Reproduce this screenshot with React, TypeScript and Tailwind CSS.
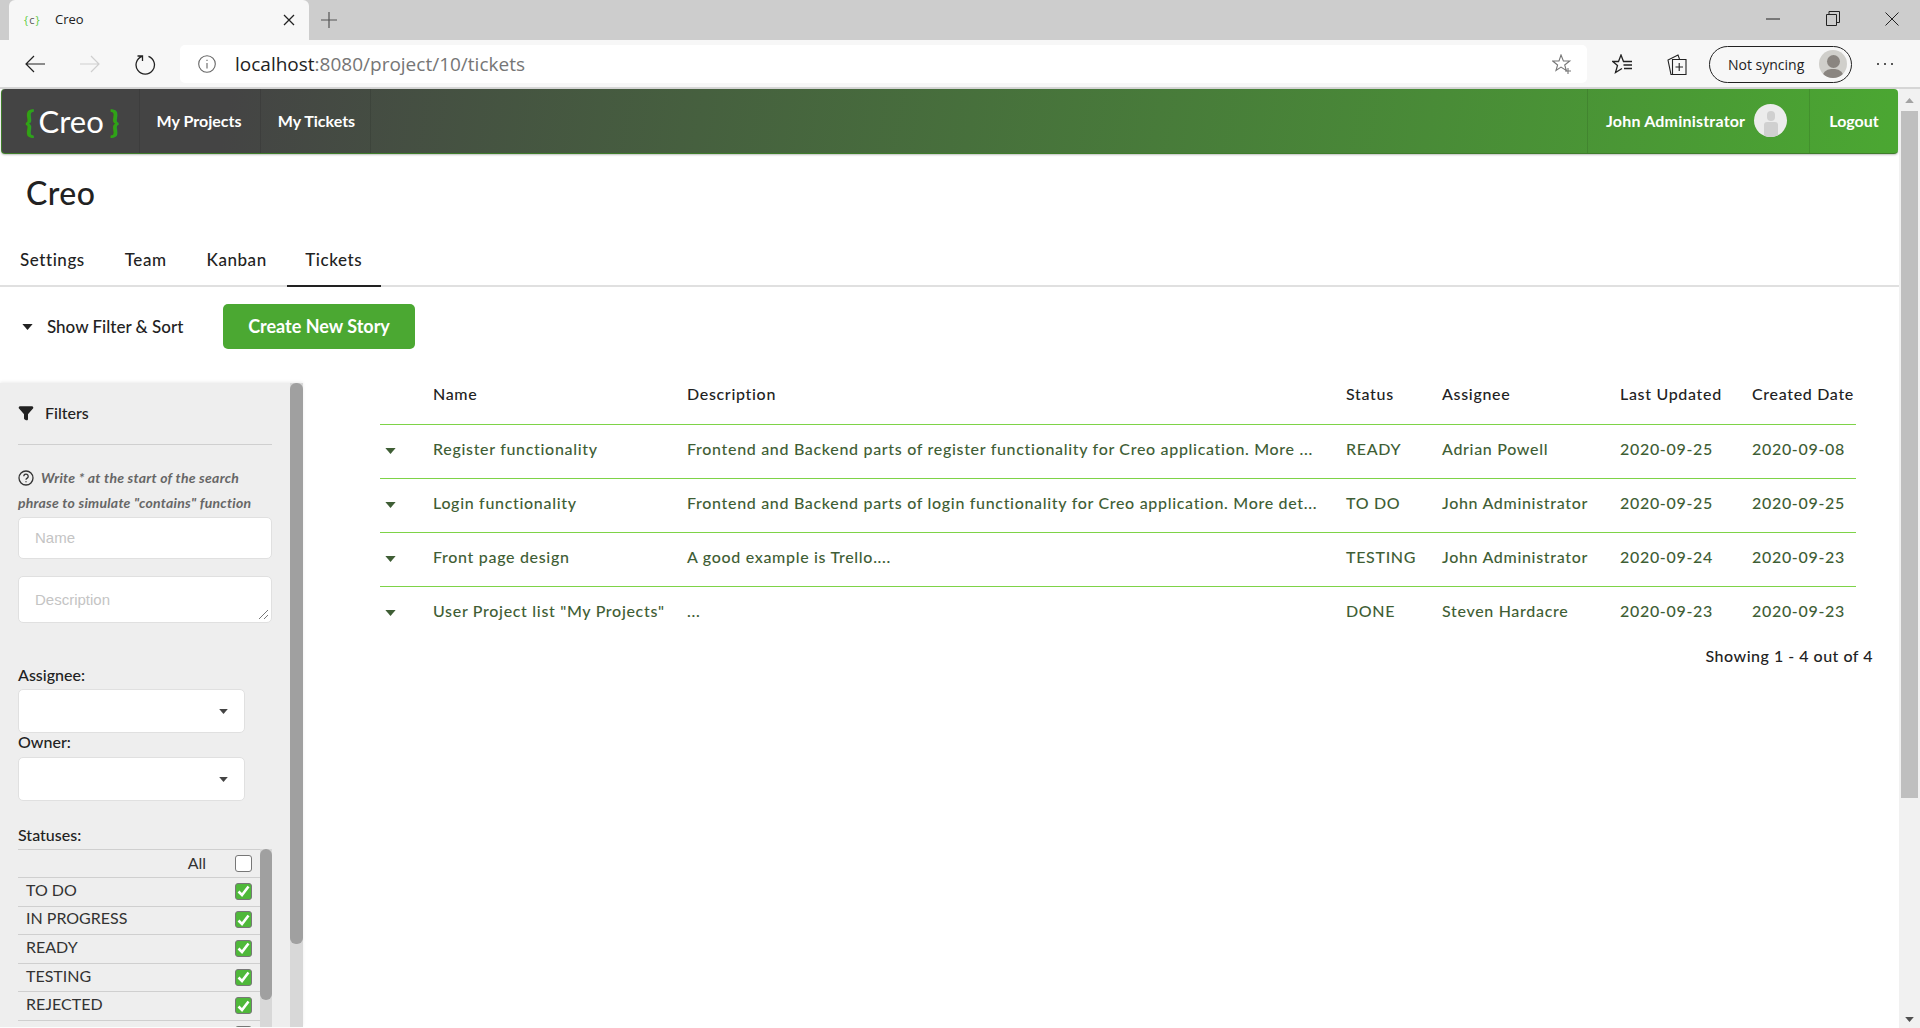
import React from "react";
import { Filter } from "lucide-react";

const rows = [
  ["Register functionality", "Frontend and Backend parts of register functionality for Creo application. More ...", "READY", "Adrian Powell", "2020-09-25", "2020-09-08"],
  ["Login functionality", "Frontend and Backend parts of login functionality for Creo application. More det...", "TO DO", "John Administrator", "2020-09-25", "2020-09-25"],
  ["Front page design", "A good example is Trello....", "TESTING", "John Administrator", "2020-09-24", "2020-09-23"],
  ['User Project list "My Projects"', "...", "DONE", "Steven Hardacre", "2020-09-23", "2020-09-23"],
];

const statuses = ["TO DO", "IN PROGRESS", "READY", "TESTING", "REJECTED", "DONE"];
const headers = ["", "Name", "Description", "Status", "Assignee", "Last Updated", "Created Date"];

function Caret({ className }: { className: string }) {
  return (
    <svg width="12" height="7" viewBox="0 0 12 7" className={className}>
      <path d="M0 0h12L6 7z" fill="currentColor" />
    </svg>
  );
}

function BrowserChrome() {
  return (
    <header className="shrink-0 font-['Open_Sans',sans-serif]">
      {/* Tab strip */}
      <div className="flex h-10 items-end bg-[#cdcdcd] pl-[9px]">
        <div className="flex h-10 w-[300px] items-center rounded-t-md bg-[#f7f7f7] pl-[15px] pr-[14px]">
          <span className="w-[31px] text-[11px] tracking-[1px] text-[#555]">
            <span className="text-[#5ecb3c]">{"{"}</span>c<span className="text-[#5ecb3c]">{"}"}</span>
          </span>
          <span className="flex-1 text-[13px] text-[#222]">Creo</span>
          <svg width="12" height="12" viewBox="0 0 12 12" stroke="#222" strokeWidth="1.3">
            <path d="M1 1l10 10M11 1L1 11" />
          </svg>
        </div>
        <svg width="18" height="18" viewBox="0 0 18 18" stroke="#555" strokeWidth="1.2" className="mb-[11px] ml-[11px]">
          <path d="M9 1v16M1 9h16" />
        </svg>
        <div className="mb-[14px] ml-auto flex items-center">
          <svg width="14" height="2" viewBox="0 0 14 2" className="mr-[46px]">
            <path d="M0 1h14" stroke="#222" />
          </svg>
          <svg width="14" height="15" viewBox="0 0 14 15" fill="none" stroke="#222" className="mr-[45px]">
            <path d="M.5 3.5h10v11H.5zM3 3.5V.5h10.5v11h-3" />
          </svg>
          <svg width="14" height="14" viewBox="0 0 14 14" stroke="#222" className="mr-[21px]">
            <path d="M.5.5l13 13M13.5.5l-13 13" />
          </svg>
        </div>
      </div>
      {/* Toolbar */}
      <div className="flex h-[49px] items-start border-b-2 border-[#d6d6d6] bg-[#f7f7f7] pt-[5px]">
        <div className="flex h-[38px] w-[180px] items-center pl-[25px]">
          <svg width="20" height="18" viewBox="0 0 20 18" fill="none" stroke="#222" strokeWidth="1.2">
            <path d="M20 9H1M9 1L1 9l8 8" />
          </svg>
          <svg width="20" height="18" viewBox="0 0 20 18" fill="none" stroke="#cfcfcf" strokeWidth="1.2" className="ml-[35px]">
            <path d="M0 9h19M11 1l8 8-8 8" />
          </svg>
          <svg width="21" height="21" viewBox="0 0 21 21" fill="none" stroke="#222" strokeWidth="1.3" className="ml-[35px]">
            <path d="M7 2.3a9.2 9.2 0 1 0 6.5 0M7.5 7V2H2.5" />
          </svg>
        </div>
        <div className="flex h-[38px] w-[1407px] items-center rounded-[5px] bg-white pl-[18px] pr-[15px]">
          <svg width="18" height="18" viewBox="0 0 18 18" fill="none" stroke="#666" strokeWidth="1.1">
            <circle cx="9" cy="9" r="8.3" />
            <path d="M9 8v5.5M9 4.8v1.2" />
          </svg>
          <span className="ml-[19px] flex-1 text-[19px] text-[#222]">
            localhost<span className="text-[#767676]">:8080/project/10/tickets</span>
          </span>
          <svg width="20" height="20" viewBox="0 0 20 20" fill="none" stroke="#777" strokeWidth="1.1">
            <path d="M9 1l2.4 6h6.3l-5 4 1.6 5.5-5.3-3.4-5 3.4L5.6 11 .7 7H7z" />
            <path d="M13 17h6M16 14v6" />
          </svg>
        </div>
        <div className="flex h-[38px] flex-1 items-center pl-[25px]">
          <svg width="21" height="20" viewBox="0 0 21 20" fill="none" stroke="#222" strokeWidth="1.3">
            <path d="M13 7.5h-1.5L9 1 6.5 7.5H.7l4.8 4-2 7 6.500-4M13 7.5h7M11.5 11h8.5M12 14.5h8" />
          </svg>
          <svg width="20" height="21" viewBox="0 0 20 21" fill="none" stroke="#222" strokeWidth="1.1" className="ml-[34px]">
            <path d="M6 20.5H4L1 6l10-5 1.5 4" />
            <path d="M5.5 5.5H19v15H5.500zM12.2 9v8M8.5 13H16" />
          </svg>
          <div className="ml-[22px] flex h-[37px] w-[143px] items-center justify-between rounded-full border border-[#222] pl-[18px] pr-[4px] text-[14px] text-[#222]">
            Not syncing
            <span className="flex h-7 w-7 flex-col items-center justify-end overflow-hidden rounded-full bg-[#d0cfcb]">
              <span className="mb-px h-[13px] w-[13px] rounded-full bg-[#8a8580]" />
              <span className="h-[9px] w-[22px] rounded-t-full bg-[#8a8580]" />
            </span>
          </div>
          <div className="ml-[25px] flex gap-[5px]">
            <span className="h-[2px] w-[2px] rounded-full bg-[#222]" />
            <span className="h-[2px] w-[2px] rounded-full bg-[#222]" />
            <span className="h-[2px] w-[2px] rounded-full bg-[#222]" />
          </div>
        </div>
      </div>
    </header>
  );
}

function NavBar() {
  return (
    <nav className="mx-px flex h-[65px] shrink-0 items-stretch rounded-[4px] border-b border-l border-[#3f7d2b] bg-linear-[100deg,#444444_12%,#4ba732_100%] text-[16px] font-bold text-white shadow-[0_1px_2px_rgba(0,0,0,0.25)]">
      <div className="flex w-[137px] items-center pl-[23px] text-[31px] font-normal leading-none">
        <span className="font-black text-[#2fa316]">{"{"}</span>
        <span className="ml-[4px]">Creo</span>
        <span className="ml-[6px] font-black text-[#2fa316]">{"}"}</span>
      </div>
      <div className="flex w-[121px] items-center justify-center border-l border-black/10 pb-px pr-[2px]">My Projects</div>
      <div className="flex w-[111px] items-center justify-center border-x border-black/10 pb-px pl-[2px]">My Tickets</div>
      <div className="flex-1" />
      <div className="flex w-[222px] items-center border-l border-black/10 pb-px pl-[18px] tracking-[0.2px]">
        <span className="w-[148px]">John Administrator</span>
        <span className="flex h-[33px] w-[33px] flex-col items-center justify-end overflow-hidden rounded-full bg-[#ececec]">
          <span className="mb-px h-[10px] w-[8px] rounded-full bg-[#d0d0d0]" />
          <span className="h-[15px] w-[14px] rounded-t-[3px] bg-[#d0d0d0]" />
        </span>
      </div>
      <div className="flex w-[89px] items-center justify-center border-l border-black/10 pb-px">Logout</div>
    </nav>
  );
}

function SelectBox() {
  return (
    <div className="flex h-[44px] w-[227px] items-center justify-end rounded-[5px] border border-[#e0e0e0] bg-white pr-4">
      <Caret className="h-[5px] w-[9px] text-[#444]" />
    </div>
  );
}

function FilterPanel() {
  return (
    <aside className="flex h-[644px] w-[303px] shrink-0 bg-[#eeeeee] shadow-[0_-1px_3px_rgba(0,0,0,0.08)]">
      <div className="w-[290px] overflow-hidden pl-[18px] pr-[18px] pt-[20px]">
        <div className="flex h-[20px] items-center text-[16px] font-medium text-[#222]">
          <Filter size={16} fill="#222" strokeWidth={2} />
          <span className="ml-[11px]">Filters</span>
        </div>
        <div className="mt-[21px] border-t border-[#cfcfcf]" />
        <div className="mt-[20px] text-[14px] font-bold italic leading-[25px] tracking-[0.25px] text-[#666]">
          <svg width="16" height="16" viewBox="0 0 16 16" fill="none" stroke="#333" strokeWidth="1.3" className="mr-[7px] inline-block align-[-3px]">
            <circle cx="8" cy="8" r="7" />
            <path d="M5.8 6.3a2.2 2.2 0 1 1 3.4 1.8c-.8.5-1.2.9-1.2 1.7M8 11.3v1" />
          </svg>
          Write * at the start of the search phrase to simulate "contains" function
        </div>
        <div className="mt-[2px] flex h-[42px] items-center rounded-[5px] border border-[#e0e0e0] bg-white pl-4 pt-px font-['Liberation_Sans',sans-serif] text-[15px] text-[#c4c4c4]">
          Name
        </div>
        <div className="relative mt-[17px] flex h-[47px] items-center rounded-[5px] border border-[#e0e0e0] bg-white pl-4 pt-px font-['Liberation_Sans',sans-serif] text-[15px] text-[#c4c4c4]">
          Description
          <svg width="11" height="11" viewBox="0 0 11 11" stroke="#777" className="absolute bottom-[2px] right-[2px]">
            <path d="M1 10L10 1M6 10l4-4" />
          </svg>
        </div>
        <div className="mt-[43px] text-[16px] font-medium leading-[18px] text-[#222]">Assignee:</div>
        <div className="mt-[5px]"><SelectBox /></div>
        <div className="text-[16px] font-medium leading-[18px] text-[#222]">Owner:</div>
        <div className="mt-[6px]"><SelectBox /></div>
        <div className="mt-[25px] text-[16px] font-medium leading-[18px] text-[#222]">Statuses:</div>
        <div className="mt-[5px] flex h-[180px] w-[254px] overflow-hidden">
          <div className="flex-1 text-[16px] text-[#333]">
            <div className="flex h-[29px] items-center justify-end border-y border-[#cfcfcf] pr-2">
              <span className="-mt-[2px] mr-[29px]">All</span>
              <span className="-mt-px h-[17px] w-[17px] rounded-[3px] border border-[#777] bg-white" />
            </div>
            {statuses.map((status) => (
              <div key={status} className="flex h-[28.6px] items-center justify-between border-b border-[#cfcfcf] pl-2 pr-2">
                <span className="-mt-[4px]">{status}</span>
                <span className="-mt-px flex h-[17px] w-[17px] items-center justify-center rounded-[3px] border border-[#777] bg-[#4fb83a]">
                  <svg width="13" height="12" viewBox="0 0 13 12" fill="none" stroke="white" strokeWidth="2.6">
                    <path d="M1.5 6.5L5 10l6.5-8.5" />
                  </svg>
                </span>
              </div>
            ))}
          </div>
          <div className="w-[12px] bg-[#d8d8d8]">
            <div className="h-[151px] rounded-full bg-[#a0a0a0]" />
          </div>
        </div>
      </div>
      <div className="w-[13px] bg-[#d8d8d8]">
        <div className="h-[561px] rounded-[6px] bg-[#a0a0a0]" />
      </div>
    </aside>
  );
}

function TicketsTable() {
  return (
    <section className="flex-1 pl-[77px] pr-[26px] text-[16px] font-medium tracking-[0.68px]">
      <div className="grid w-[1476px] grid-cols-[53px_254px_659px_96px_178px_132px_104px]">
        {headers.map((header, i) => (
          <div key={i} className="flex h-[42px] items-start whitespace-nowrap border-b border-[#7ed348] text-[#222]">
            <span className="-mt-[1px]">{header}</span>
          </div>
        ))}
        {rows.map((row, r) =>
          [null, ...row].map((cell, c) => (
            <div
              key={`${r}-${c}`}
              className={`flex h-[54px] items-center whitespace-nowrap border-b text-[#3f5e35] ${
                cell === null ? "pb-[2px]" : "pb-[5px]"
              } ${r < rows.length - 1 ? "border-[#7ed348]" : "border-transparent"}`}
            >
              {cell === null ? <Caret className="ml-[5px] h-[6px] w-[11px] text-[#3f5e35]" /> : cell}
            </div>
          )),
        )}
      </div>
      <div className="pt-[3px] text-right tracking-[0.5px] text-[#222]">Showing 1 - 4 out of 4</div>
    </section>
  );
}

export default function App() {
  return (
    <div className="flex h-[1028px] w-[1920px] flex-col overflow-hidden bg-white font-['Lato',sans-serif]">
      <BrowserChrome />
      <div className="flex min-h-0 flex-1">
        <main className="flex w-[1899px] flex-col">
          <NavBar />
          <h1 className="pl-[26px] pt-[17px] text-[32px] font-medium leading-[44px] tracking-[0.5px] text-[#222]">Creo</h1>
          <div className="mt-[22px] flex h-[50px] border-b-2 border-[#e0e0e0] text-[17px] font-medium tracking-[0.55px] text-[#222]">
            <button className="-mb-[2px] px-5 pb-[4px]">Settings</button>
            <button className="-mb-[2px] px-5 pb-[4px]">Team</button>
            <button className="-mb-[2px] px-5 pb-[4px]">Kanban</button>
            <button className="-mb-[2px] w-[94px] border-b-2 border-[#222] pb-[2px]">Tickets</button>
          </div>
          <div className="flex items-center pl-[22px] pt-[17px]">
            <Caret className="h-[6px] w-[11px] text-[#222]" />
            <span className="ml-[14px] w-[176px] text-[17px] font-medium text-[#222]">Show Filter &amp; Sort</span>
            <button className="h-[45px] w-[192px] rounded-[5px] bg-[#4ba832] text-[18px] font-bold text-white">
              Create New Story
            </button>
          </div>
          <div className="mt-[34px] flex">
            <FilterPanel />
            <TicketsTable />
          </div>
        </main>
        <div className="flex w-[21px] flex-col bg-[#f1f1f1] px-[2px]">
          <div className="flex h-[22px] items-center justify-center">
            <Caret className="h-[5px] w-[9px] rotate-180 text-[#a3a3a3]" />
          </div>
          <div className="h-[687px] bg-[#bfbfbf]" />
          <div className="mt-auto flex h-[18px] items-center justify-center">
            <Caret className="h-[5px] w-[9px] text-[#505050]" />
          </div>
        </div>
      </div>
    </div>
  );
}
